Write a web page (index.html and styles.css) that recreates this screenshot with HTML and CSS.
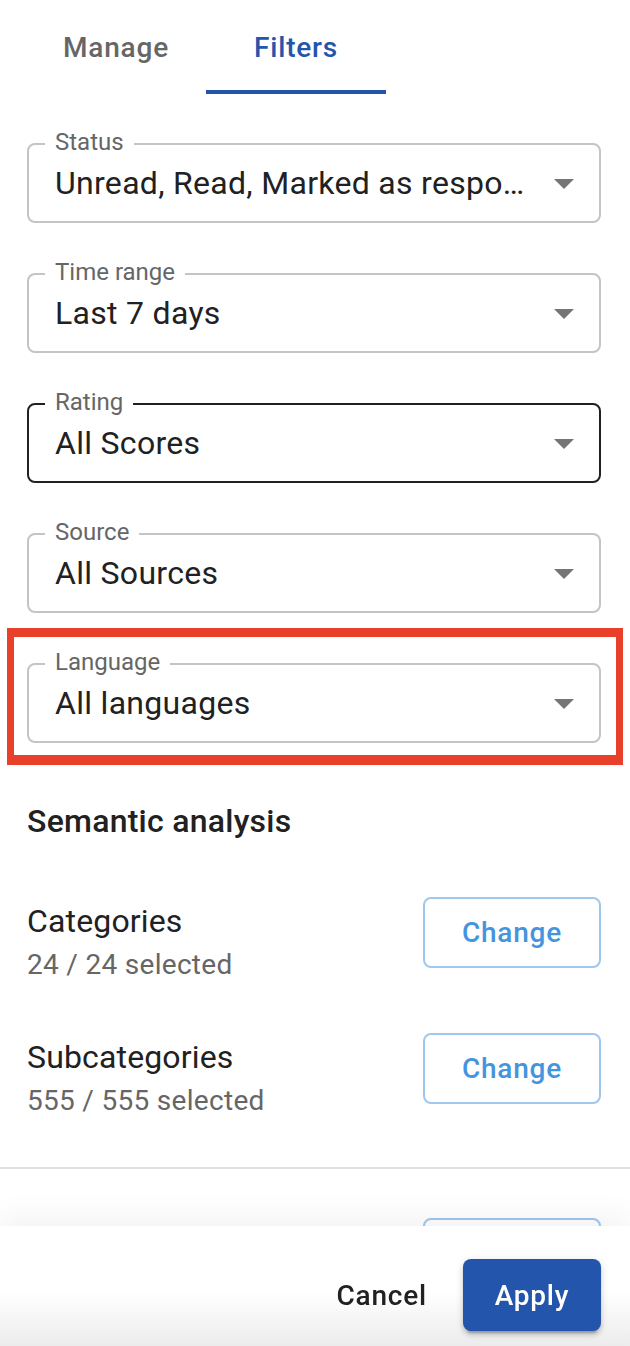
FILE: index.html
```html
<!DOCTYPE html>
<html lang="en">
<head>
<meta charset="utf-8">
<title>Filters</title>
<link rel="stylesheet" href="styles.css">
</head>
<body>
<div class="panel">
  <nav class="tabs">
    <div class="tab">Manage</div>
    <div class="tab active">Filters</div>
  </nav>

  <div class="content">
    <div class="fields">
      <div class="field">
        <span class="label">Status</span>
        <span class="value">Unread, Read, Marked as respo…</span>
        <svg class="arrow" viewBox="0 0 24 24"><path d="M7 10l5 5 5-5z"/></svg>
      </div>
      <div class="field">
        <span class="label">Time range</span>
        <span class="value">Last 7 days</span>
        <svg class="arrow" viewBox="0 0 24 24"><path d="M7 10l5 5 5-5z"/></svg>
      </div>
      <div class="field hover">
        <span class="label">Rating</span>
        <span class="value">All Scores</span>
        <svg class="arrow" viewBox="0 0 24 24"><path d="M7 10l5 5 5-5z"/></svg>
      </div>
      <div class="field">
        <span class="label">Source</span>
        <span class="value">All Sources</span>
        <svg class="arrow" viewBox="0 0 24 24"><path d="M7 10l5 5 5-5z"/></svg>
      </div>
      <div class="field highlighted">
        <span class="label">Language</span>
        <span class="value">All languages</span>
        <svg class="arrow" viewBox="0 0 24 24"><path d="M7 10l5 5 5-5z"/></svg>
      </div>
    </div>

    <h2 class="section-title">Semantic analysis</h2>

    <div class="rows">
      <div class="row">
        <div class="row-text">
          <div class="row-title">Categories</div>
          <div class="row-sub">24 / 24 selected</div>
        </div>
        <button class="btn-outline">Change</button>
      </div>
      <div class="row">
        <div class="row-text">
          <div class="row-title">Subcategories</div>
          <div class="row-sub">555 / 555 selected</div>
        </div>
        <button class="btn-outline">Change</button>
      </div>
    </div>
  </div>

  <hr class="divider">

  <div class="content more">
    <div class="row end">
      <button class="btn-outline">Change</button>
    </div>
  </div>
</div>

<footer class="footer">
  <button class="btn-text">Cancel</button>
  <button class="btn-primary">Apply</button>
</footer>
</body>
</html>
```
FILE: styles.css
```css
* {
  box-sizing: border-box;
}

html, body {
  margin: 0;
  padding: 0;
  background: #ffffff;
}

body {
  font-family: Roboto, "Liberation Sans", Arial, sans-serif;
  color: #212121;
}

.panel {
  padding-bottom: 200px;
}

/* Tabs */
.tabs {
  display: flex;
  padding-left: 26px;
  height: 94px;
}

.tab {
  width: 180px;
  height: 94px;
  display: flex;
  align-items: center;
  justify-content: center;
  font-size: 28px;
  font-weight: 500;
  letter-spacing: 0.8px;
  color: #666666;
}

.tab.active {
  color: #2455ac;
  box-shadow: inset 0 -4px 0 #2455ac;
}

/* Content */
.content {
  padding: 0 29px 0 27px;
}

.fields {
  margin-top: 49px;
  display: flex;
  flex-direction: column;
  gap: 50px;
}

.field {
  position: relative;
  height: 80px;
  border: 2px solid #c4c4c4;
  border-radius: 8px;
  padding: 0 11px 0 26px;
  display: flex;
  align-items: center;
}

.field.hover {
  border-color: #212121;
}

.label {
  position: absolute;
  top: -15px;
  left: 16px;
  padding: 0 10px;
  background: #ffffff;
  font-size: 24px;
  line-height: 24px;
  color: #666666;
}

.value {
  flex: 1;
  min-width: 0;
  margin-right: 5px;
  font-size: 32px;
  line-height: 46px;
  letter-spacing: 0.3px;
  color: #212121;
  white-space: nowrap;
  overflow: hidden;
  text-overflow: ellipsis;
}

.arrow {
  width: 48px;
  height: 48px;
  flex: none;
  fill: #757575;
}

.highlighted::after {
  content: "";
  position: absolute;
  top: -37px;
  left: -22px;
  right: -24px;
  bottom: -24px;
  border-style: solid;
  border-color: #e8402b;
  border-width: 9px 7px 10px 7px;
  pointer-events: none;
}

.section-title {
  margin: 54px 0 0;
  font-size: 32px;
  line-height: 48px;
  font-weight: 500;
  letter-spacing: 0.25px;
  color: #212121;
}

.rows {
  margin-top: 52px;
  display: flex;
  flex-direction: column;
  gap: 48px;
}

.row {
  display: flex;
  justify-content: space-between;
  align-items: flex-start;
}

.row.end {
  justify-content: flex-end;
}

.row-title {
  font-size: 32px;
  line-height: 48px;
  letter-spacing: 0.15px;
  color: #212121;
}

.row-sub {
  font-size: 28px;
  line-height: 40px;
  letter-spacing: 0.3px;
  color: #666666;
}

.btn-outline {
  width: 178px;
  height: 71px;
  border: 2px solid #9fc8ef;
  border-radius: 8px;
  background: #ffffff;
  font-family: Roboto, "Liberation Sans", Arial, sans-serif;
  font-size: 28px;
  font-weight: 500;
  letter-spacing: 0.8px;
  color: #4495e0;
  padding: 0;
}

.divider {
  margin: 46px 0 0;
  border: 0;
  height: 2px;
  background: #e0e0e0;
}

.more {
  margin-top: 49px;
}

/* Footer */
.footer {
  position: fixed;
  left: 0;
  right: 0;
  bottom: 0;
  height: 120px;
  padding: 33px 29px 0 0;
  display: flex;
  justify-content: flex-end;
  align-items: flex-start;
  gap: 20px;
  background: linear-gradient(to bottom, #ffffff 0%, #ffffff 55%, #ececec 100%);
  box-shadow: 0 -10px 28px rgba(0, 0, 0, 0.05);
}

.btn-text {
  height: 72px;
  padding: 0 16px;
  border: 0;
  background: transparent;
  font-family: Roboto, "Liberation Sans", Arial, sans-serif;
  font-size: 28px;
  font-weight: 500;
  letter-spacing: 0.8px;
  color: #212121;
}

.btn-primary {
  width: 138px;
  height: 72px;
  padding: 0;
  border: 0;
  border-radius: 8px;
  background: #2455ac;
  font-family: Roboto, "Liberation Sans", Arial, sans-serif;
  font-size: 28px;
  font-weight: 500;
  letter-spacing: 0.8px;
  color: #ffffff;
  box-shadow: 0 6px 2px -4px rgba(0, 0, 0, 0.2), 0 4px 4px 0 rgba(0, 0, 0, 0.14), 0 2px 10px 0 rgba(0, 0, 0, 0.12);
}
```
